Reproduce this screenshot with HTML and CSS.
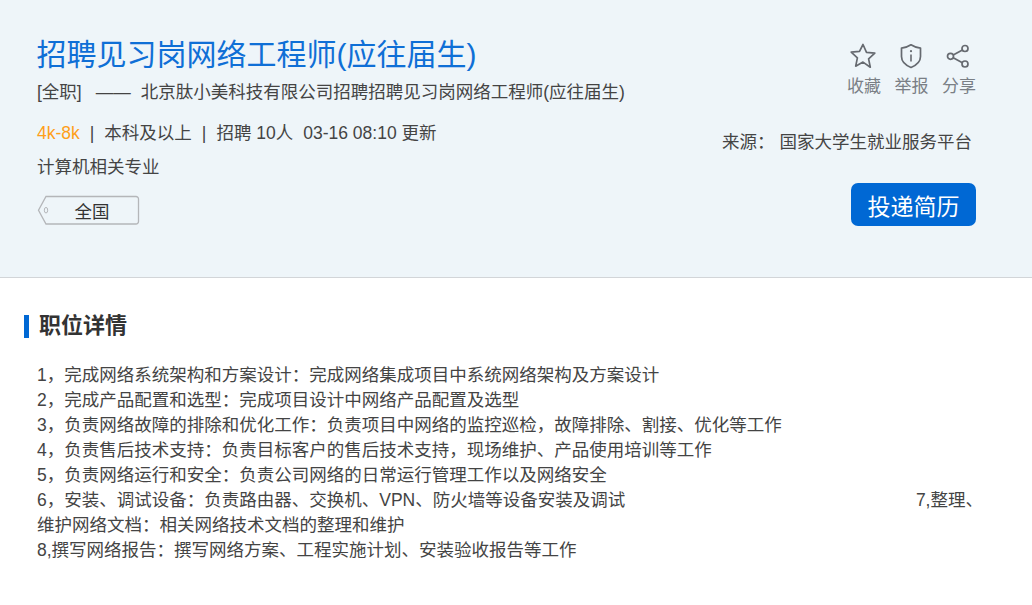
FILE: index.html
```html
<!DOCTYPE html>
<html lang="zh-CN">
<head>
<meta charset="utf-8">
<title>招聘见习岗网络工程师(应往届生)</title>
<link rel="stylesheet" href="styles.css">
</head>
<body>
<header class="hero">
  <div class="hero-main">
    <h1 class="job-title">招聘见习岗网络工程师(应往届生)</h1>
    <p class="subtitle"><span>[全职]</span><span class="dash">——</span><span>北京肽小美科技有限公司招聘招聘见习岗网络工程师(应往届生)</span></p>
    <p class="meta"><span class="salary">4k-8k</span><span class="sep">|</span>本科及以上<span class="sep">|</span>招聘 10人<span class="time">03-16 08:10 更新</span></p>
    <p class="major">计算机相关专业</p>
    <div class="tag">
      <svg class="tag-shape" width="103" height="31" viewBox="0 0 103 31"><path d="M9 1.500H99a2.500 2.500 0 0 1 2.500 2.500V26.500a2.500 2.500 0 0 1-2.500 2.500H9L1.500 15.200Z" fill="none" stroke="#b4b6b9" stroke-width="1.300"/><ellipse cx="9" cy="15.200" rx="1.700" ry="2.800" fill="none" stroke="#b4b6b9"/></svg>
      <span class="tag-text">全国</span>
    </div>
  </div>
  <div class="hero-side">
    <div class="actions">
      <div class="action">
        <svg class="icon" viewBox="0 0 28 28" width="28" height="28"><path d="M14 2.500l3.500 7.800 8.300.9-6.200 5.700 1.700 8.300L14 20.100l-7.300 4.100 1.700-8.300-6.200-5.700 8.300-.9Z" fill="none" stroke="#666a70" stroke-width="1.700" stroke-linejoin="round"/></svg>
        <span>收藏</span>
      </div>
      <div class="action">
        <svg class="icon" viewBox="0 0 28 28" width="28" height="28"><path d="M14 2.800c2.600 1.800 5.600 2.800 9.500 3.300v8.400c0 5-3.800 8.600-9.500 11-5.700-2.400-9.500-6-9.500-11V6.100c3.900-.5 6.900-1.500 9.500-3.300Z" fill="none" stroke="#666a70" stroke-width="1.700" stroke-linejoin="round"/><path d="M14 12.500v7" stroke="#666a70" stroke-width="1.600"/><circle cx="14" cy="9.200" r="1.100" fill="#666a70"/></svg>
        <span>举报</span>
      </div>
      <div class="action">
        <svg class="icon" viewBox="0 0 28 28" width="28" height="28"><g fill="none" stroke="#666a70" stroke-width="1.700"><circle cx="21" cy="6.500" r="3"/><circle cx="21" cy="22" r="3"/><circle cx="6.500" cy="14.300" r="3"/><path d="M9.200 12.900l9.200-5M9.200 15.700l9.200 5"/></g></svg>
        <span>分享</span>
      </div>
    </div>
    <p class="source"><span class="source-label">来源：</span>国家大学生就业服务平台</p>
    <a class="apply">投递简历</a>
  </div>
</header>
<main class="details">
  <h2 class="section-title">职位详情</h2>
  <div class="desc">
    1，完成网络系统架构和方案设计：完成网络集成项目中系统网络架构及方案设计<br>
    2，完成产品配置和选型：完成项目设计中网络产品配置及选型<br>
    3，负责网络故障的排除和优化工作：负责项目中网络的监控巡检，故障排除、割接、优化等工作<br>
    4，负责售后技术支持：负责目标客户的售后技术支持，现场维护、产品使用培训等工作<br>
    5，负责网络运行和安全：负责公司网络的日常运行管理工作以及网络安全<br>
    <span class="justified">6，安装、调试设备：负责路由器、交换机、VPN、防火墙等设备安装及调试<span class="right">7,整理、</span></span>
    维护网络文档：相关网络技术文档的整理和维护<br>
    8,撰写网络报告：撰写网络方案、工程实施计划、安装验收报告等工作
  </div>
</main>
</body>
</html>
```
FILE: styles.css
```css
* { box-sizing: border-box; }
html, body { margin: 0; padding: 0; }
body {
  width: 1032px;
  height: 605px;
  overflow: hidden;
  background: #fff;
  font-family: "Liberation Sans", "Noto Sans CJK SC", sans-serif;
  font-size: 17.5px;
  color: #444;
}
p, h1, h2 { margin: 0; font-weight: normal; }
.hero {
  height: 278px;
  background: #eef5f9;
  border-bottom: 1px solid #d2d5d8;
  padding: 34px 56px 0 37px;
  display: flex;
  justify-content: space-between;
}
.job-title { font-size: 30px; line-height: 42px; color: #0f6fd6; margin-left: -0.5px; }
.subtitle { margin-top: 4px; line-height: 25px; color: #444; }
.dash { margin: 0 10px 0 14px; }
.meta { margin-top: 15px; line-height: 26px; }
.salary { color: #ff9f1a; }
.sep { margin: 0 10px; }
.time { margin-left: 10px; }
.major { margin-top: 8px; line-height: 26px; }
.tag { position: relative; width: 103px; height: 31px; margin-top: 15px; display: flex; align-items: center; justify-content: center; }
.tag-shape { position: absolute; left: 0; top: 0; }
.tag-text { position: relative; color: #333; padding-left: 7px; }
.hero-side { display: flex; flex-direction: column; align-items: flex-end; }
.actions { display: flex; gap: 13.5px; margin-top: 8px; }
.action { display: flex; flex-direction: column; align-items: center; color: #7a7f85; width: 34px; line-height: 24px; font-size: 17px; }
.icon { display: block; margin: 0 0 5px -2px; }
.source { margin-top: 30px; margin-right: 4px; line-height: 26px; color: #444; }
.source-label { margin-right: 5px; }
.apply {
  margin-top: 28px;
  width: 125px;
  height: 43px;
  border-radius: 7px;
  background: #0068d4;
  color: #fff;
  font-size: 23px;
  display: flex;
  align-items: center;
  justify-content: center;
}
.details { padding: 0 56px 0 37px; }
.section-title {
  position: relative;
  margin-top: 34px;
  padding-left: 2px;
  font-size: 22px;
  line-height: 28px;
  font-weight: bold;
  color: #333;
}
.section-title::before {
  content: "";
  position: absolute;
  left: -13px;
  top: 3px;
  width: 5px;
  height: 23px;
  background: #0068d4;
}
.desc { margin-top: 23px; line-height: 25px; color: #444; }
.justified { display: flex; justify-content: space-between; }
.right { display: block; margin-right: -7px; }
```
